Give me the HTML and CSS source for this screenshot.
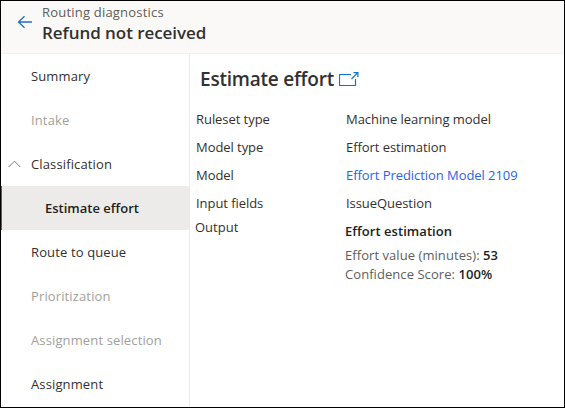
FILE: index.html
```html
<!DOCTYPE html>
<html lang="en">
<head>
<meta charset="utf-8">
<title>Routing diagnostics</title>
<link rel="stylesheet" href="styles.css">
</head>
<body>
<div class="window">
  <header class="header">
    <svg class="back" width="16" height="14" viewBox="0 0 16 14"><path d="M15 7H1.5M7.5 1.2L1.5 7l6 5.8"/></svg>
    <div class="titles">
      <div class="eyebrow">Routing diagnostics</div>
      <h1 class="title">Refund not received</h1>
    </div>
  </header>
  <div class="body">
    <nav class="nav">
      <a class="item">Summary</a>
      <a class="item disabled">Intake</a>
      <a class="item group"><svg class="chevron" width="13" height="8" viewBox="0 0 13 8"><path d="M.7 7L6.5 1.2 12.3 7"/></svg>Classification</a>
      <a class="item selected">Estimate effort</a>
      <a class="item">Route to queue</a>
      <a class="item disabled">Prioritization</a>
      <a class="item disabled">Assignment selection</a>
      <a class="item">Assignment</a>
    </nav>
    <main class="main">
      <h2 class="heading"><span>Estimate effort</span><svg class="open" width="20" height="15" viewBox="0 0 20 15"><path d="M12 2.5H.5v11h16V7"/><path d="M12.5 7L18.8 .7M14.5 .6h4.4v4.4"/></svg></h2>
      <dl class="details">
        <dt>Ruleset type</dt><dd>Machine learning model</dd>
        <dt>Model type</dt><dd>Effort estimation</dd>
        <dt>Model</dt><dd><a class="link">Effort Prediction Model 2109</a></dd>
        <dt>Input fields</dt><dd>IssueQuestion</dd>
      </dl>
      <div class="output">
        <div class="output-label">Output</div>
        <div class="result">
          <div class="result-title">Effort estimation</div>
          <div class="value">Effort value (minutes): <b>53</b></div>
          <div class="value score">Confidence Score: <b>100%</b></div>
        </div>
      </div>
    </main>
  </div>
</div>
</body>
</html>
```
FILE: styles.css
```css
* { box-sizing: border-box; }
body { margin: 0; font: 13px/20px "Open Sans", "Noto Sans", sans-serif; color: #323130; background: #fff; }
h1, h2, dl, dd { margin: 0; }
.window { width: 565px; height: 408px; border: 1px solid #000; display: flex; flex-direction: column; overflow: hidden; }
.header { flex: none; height: 53px; display: flex; background: #faf9f8; border-bottom: 1px solid #f3f2f1; }
svg { fill: none; flex: none; }
.back { margin: 14px 9px 0 16px; stroke: #1f6fc9; stroke-width: 1.3; }
.eyebrow { margin-top: 1px; color: #605e5c; letter-spacing: .2px; }
.title { font-size: 17px; line-height: 22px; font-weight: 600; letter-spacing: -.05px; }
.body { flex: 1; display: flex; min-height: 0; }
.nav { width: 189px; border-right: 1px solid #edebe9; letter-spacing: .13px; }
.item { display: flex; align-items: center; height: 44px; padding-left: 30px; }
.disabled { color: #a19f9d; }
.group { padding-left: 7px; }
.chevron { margin-right: 10px; stroke: #797775; }
.selected { padding-left: 43px; background: #edebe9; border-left: 1px solid #0078d4; border-radius: 0 2px 2px 0; font-weight: 600; color: #201f1e; letter-spacing: 0; }
.main { flex: 1; padding-left: 6px; }
.heading { display: flex; align-items: center; gap: 5px; height: 24px; margin: 13px 0 14px 4px; font-size: 19px; font-weight: 600; letter-spacing: -.22px; }
.open { stroke: #0f74d1; stroke-width: 1.2; }
.details { display: grid; grid-template-columns: 150px 1fr; line-height: 28px; letter-spacing: -.06px; }
.link { color: #2b63e3; }
.output { display: flex; margin-left: -1px; }
.output-label { width: 150px; }
.result { padding-top: 4px; }
.result-title { font-weight: 600; color: #201f1e; margin-bottom: 4px; letter-spacing: .05px; }
.value { color: #605e5c; letter-spacing: .06px; }
.score { margin-top: -1px; }
b { font-weight: 600; color: #201f1e; }
```
